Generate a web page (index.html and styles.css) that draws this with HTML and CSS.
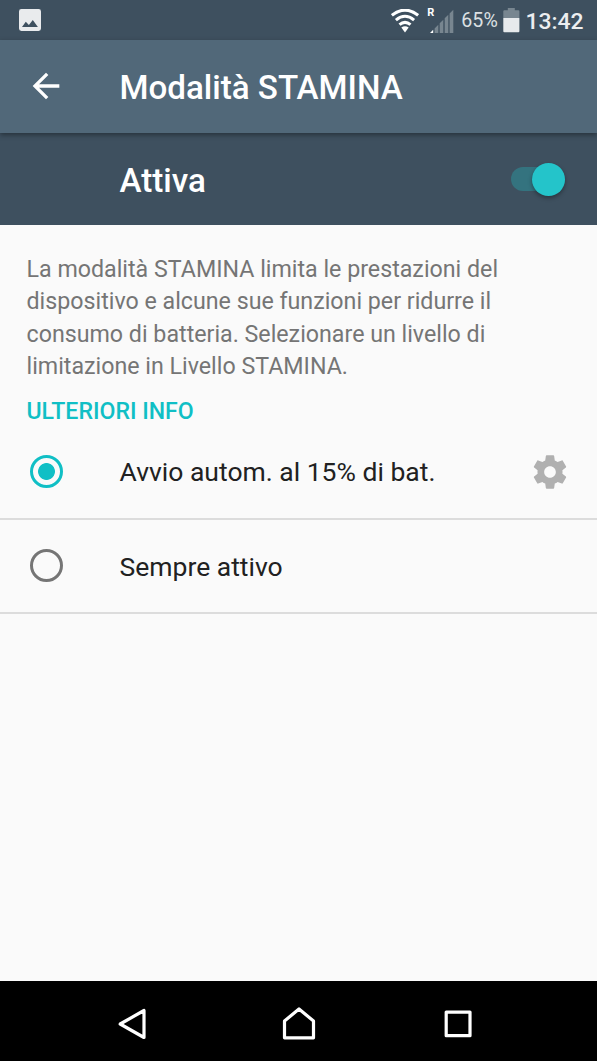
FILE: index.html
```html
<!DOCTYPE html>
<html lang="it">
<head>
<meta charset="utf-8">
<title>Modalità STAMINA</title>
<link rel="stylesheet" href="styles.css">
</head>
<body>
<div class="screen">
  <header class="status">
    <svg class="picture" width="22" height="22" viewBox="0 0 22 22"><path fill="#e9ebed" fill-rule="evenodd" d="M2.4 0H19.6Q22 0 22 2.4V19.6Q22 22 19.6 22H2.4Q0 22 0 19.6V2.4Q0 0 2.4 0ZM3 17.9H18.9L13.8 11.1L9.9 16L6.8 12.8Z"/></svg>
    <div class="indicators">
      <svg class="wifi" width="28" height="24" viewBox="0 0 28 24" fill="none" stroke="#fff" stroke-width="3"><path d="M.9 6.3Q14-4.1 27.1 6.3M4.9 11.1Q14 3.5 23.1 11.1M8.5 15.7Q14 11 19.5 15.7"/><path fill="#fff" stroke="none" d="M10.3 18.6Q14 15.7 17.7 18.6L14 23.4Z"/></svg>
      <div class="signal">
        <span class="roaming">R</span>
        <svg width="24" height="24" viewBox="0 0 24 24" fill="#788690"><path fill="#fff" d="M0 24L3.2 20.8V24Z"/><path d="M4.6 19.4L8.3 15.7V24H4.6ZM9.7 14.3L13.3 10.7V24H9.7ZM14.7 9.3L18.3 5.7V24H14.7ZM19.6 4.4L23.3.7V24H19.6Z"/></svg>
      </div>
      <span class="percent">65%</span>
      <svg class="battery" width="17" height="25" viewBox="0 0 17 25"><path fill="#788690" d="M4.8 0H11.8V2.2H15.4Q16.4 2.2 16.4 3.2V10H.3V3.2Q.3 2.2 1.3 2.2H4.8Z"/><path fill="#e7eaec" d="M.3 10H16.4V23.3Q16.4 24.3 15.4 24.3H1.3Q.3 24.3 .3 23.3Z"/></svg>
      <span class="clock">13:42</span>
    </div>
  </header>
  <div class="appbar">
    <svg class="back" width="40" height="40" viewBox="0 0 24 24"><path fill="#fff" d="M20 11H7.83l5.59-5.59L12 4l-8 8 8 8 1.41-1.41L7.83 13H20v-2z"/></svg>
    <h1 class="title">Modalità STAMINA</h1>
  </div>
  <div class="master">
    <span class="master-label">Attiva</span>
    <span class="switch"><span class="thumb"></span></span>
  </div>
  <main class="content">
    <p class="description">La modalità STAMINA limita le prestazioni del<br>dispositivo e alcune sue funzioni per ridurre il<br>consumo di batteria. Selezionare un livello di<br>limitazione in Livello STAMINA.</p>
    <a class="more">ULTERIORI INFO</a>
    <div class="option option-first">
      <span class="radio radio-on"></span>
      <span class="option-label">Avvio autom. al 15% di bat.</span>
      <svg class="gear" width="40" height="40" viewBox="0 0 24 24"><path fill="#b0b0b0" d="M19.43 12.98c.04-.32.07-.64.07-.98s-.03-.66-.07-.98l2.11-1.65c.19-.15.24-.42.12-.64l-2-3.46c-.12-.22-.39-.3-.61-.22l-2.49 1c-.52-.4-1.08-.73-1.69-.98l-.38-2.65C14.46 2.18 14.25 2 14 2h-4c-.25 0-.46.18-.49.42l-.38 2.65c-.61.25-1.17.59-1.69.98l-2.49-1c-.23-.09-.49 0-.61.22l-2 3.46c-.13.22-.07.49.12.64l2.11 1.65c-.04.32-.07.65-.07.98s.03.66.07.98l-2.11 1.65c-.19.15-.24.42-.12.64l2 3.46c.12.22.39.3.61.22l2.49-1c.52.4 1.08.73 1.69.98l.38 2.65c.03.24.24.42.49.42h4c.25 0 .46-.18.49-.42l.38-2.65c.61-.25 1.17-.59 1.69-.98l2.49 1c.23.09.49 0 .61-.22l2-3.46c.12-.22.07-.49-.12-.64l-2.11-1.65zM12 15.5c-1.93 0-3.5-1.57-3.5-3.5s1.57-3.5 3.5-3.5 3.5 1.57 3.5 3.5-1.57 3.5-3.5 3.5z"/></svg>
    </div>
    <div class="option option-last">
      <span class="radio"></span>
      <span class="option-label">Sempre attivo</span>
    </div>
  </main>
  <nav class="navbar">
    <svg class="nav-back" width="36" height="36" viewBox="0 0 36 36"><path d="M5.2 18L29 4.5V31.5Z"/></svg>
    <svg width="36" height="36" viewBox="0 0 36 36"><path d="M3.5 15L18 3L32.5 15V31.8H3.5Z"/></svg>
    <svg width="36" height="36" viewBox="0 0 36 36"><path d="M6.2 6.1H30V29.7H6.2Z"/></svg>
  </nav>
</div>
</body>
</html>
```
FILE: styles.css
```css
body {
  margin: 0;
  font-family: Roboto, "Noto Sans", sans-serif;
  -webkit-font-smoothing: antialiased;
}
svg { display: block; flex: none; }
.screen {
  display: flex;
  flex-direction: column;
  width: 597px;
  height: 1061px;
  overflow: hidden;
  background: #fafafa;
}
.status {
  display: flex;
  flex: none;
  justify-content: space-between;
  box-sizing: border-box;
  height: 40px;
  padding: 0 13.5px 0 19px;
  background: #3e505f;
}
.picture { margin-top: 9px; }
.indicators { display: flex; }
.wifi { margin: 9px 8px 0 0; }
.signal { display: flex; margin-right: 7px; padding-top: 9px; }
.roaming {
  width: 7px;
  margin: -2px -4px 0 0;
  color: #fff;
  font-size: 11px;
  font-weight: 700;
  line-height: 12px;
}
.percent { margin-right: 5px; color: #dce0e3; font-size: 19.6px; line-height: 42px; }
.battery { margin: 7.5px 5.7px 0 0; }
.clock { color: #eceef0; font-size: 22.9px; font-weight: 500; line-height: 43px; }
.appbar {
  display: flex;
  flex: none;
  z-index: 1;
  height: 93px;
  background: #516879;
  box-shadow: 0 2px 5px rgba(0, 0, 0, .38);
}
.back { margin: 26px 53.5px 0 26px; }
.title { margin: 0; color: #fff; font-size: 33.15px; font-weight: 500; line-height: 96px; }
.master {
  display: flex;
  flex: none;
  justify-content: space-between;
  height: 92px;
  padding: 0 32px 0 119.5px;
  background: #3e505f;
}
.master-label { color: #fff; font-size: 33.2px; font-weight: 500; line-height: 96px; }
.switch {
  display: flex;
  justify-content: flex-end;
  align-items: center;
  width: 54px;
  height: 24px;
  margin-top: 34px;
  border-radius: 12px;
  background: #34737f;
}
.thumb {
  width: 33px;
  height: 33px;
  border-radius: 50%;
  background: #24c4ca;
  box-shadow: 0 2px 4px rgba(0, 0, 0, .35);
}
.content { display: flex; flex: 1; flex-direction: column; padding-top: 28px; }
.description { margin: 0 0 0 26.5px; color: #757575; font-size: 23.22px; line-height: 32.4px; }
.more {
  margin: 14px 0 0 26.5px;
  color: #10bfc5;
  font-size: 23.1px;
  font-weight: 500;
  line-height: 30px;
}
.option {
  display: flex;
  align-items: center;
  box-sizing: border-box;
  height: 95px;
  padding: 0 27px 0 30px;
  border-bottom: 2px solid #dcdcdc;
}
.option-first { margin-top: -2px; }
.option-last { height: 94.5px; }
.radio {
  display: flex;
  box-sizing: border-box;
  width: 33px;
  height: 33px;
  margin-right: 56.5px;
  border: 3.3px solid #757575;
  border-radius: 50%;
}
.radio-on {
  border-color: #10bfc5;
  background: radial-gradient(circle, #10bfc5 8px, transparent 8.8px);
}
.option-label { flex: 1; padding-top: 2px; color: #212121; font-size: 26.5px; line-height: 36px; }
.gear { margin-top: 1px; }
.navbar {
  display: flex;
  flex: none;
  justify-content: center;
  gap: 123px;
  box-sizing: border-box;
  height: 80px;
  padding-top: 25px;
  background: #000;
}
.nav-back { margin: 0 7px 0 -7px; }
.navbar path { fill: none; stroke: #fff; stroke-width: 3.2; stroke-linejoin: round; }
```
